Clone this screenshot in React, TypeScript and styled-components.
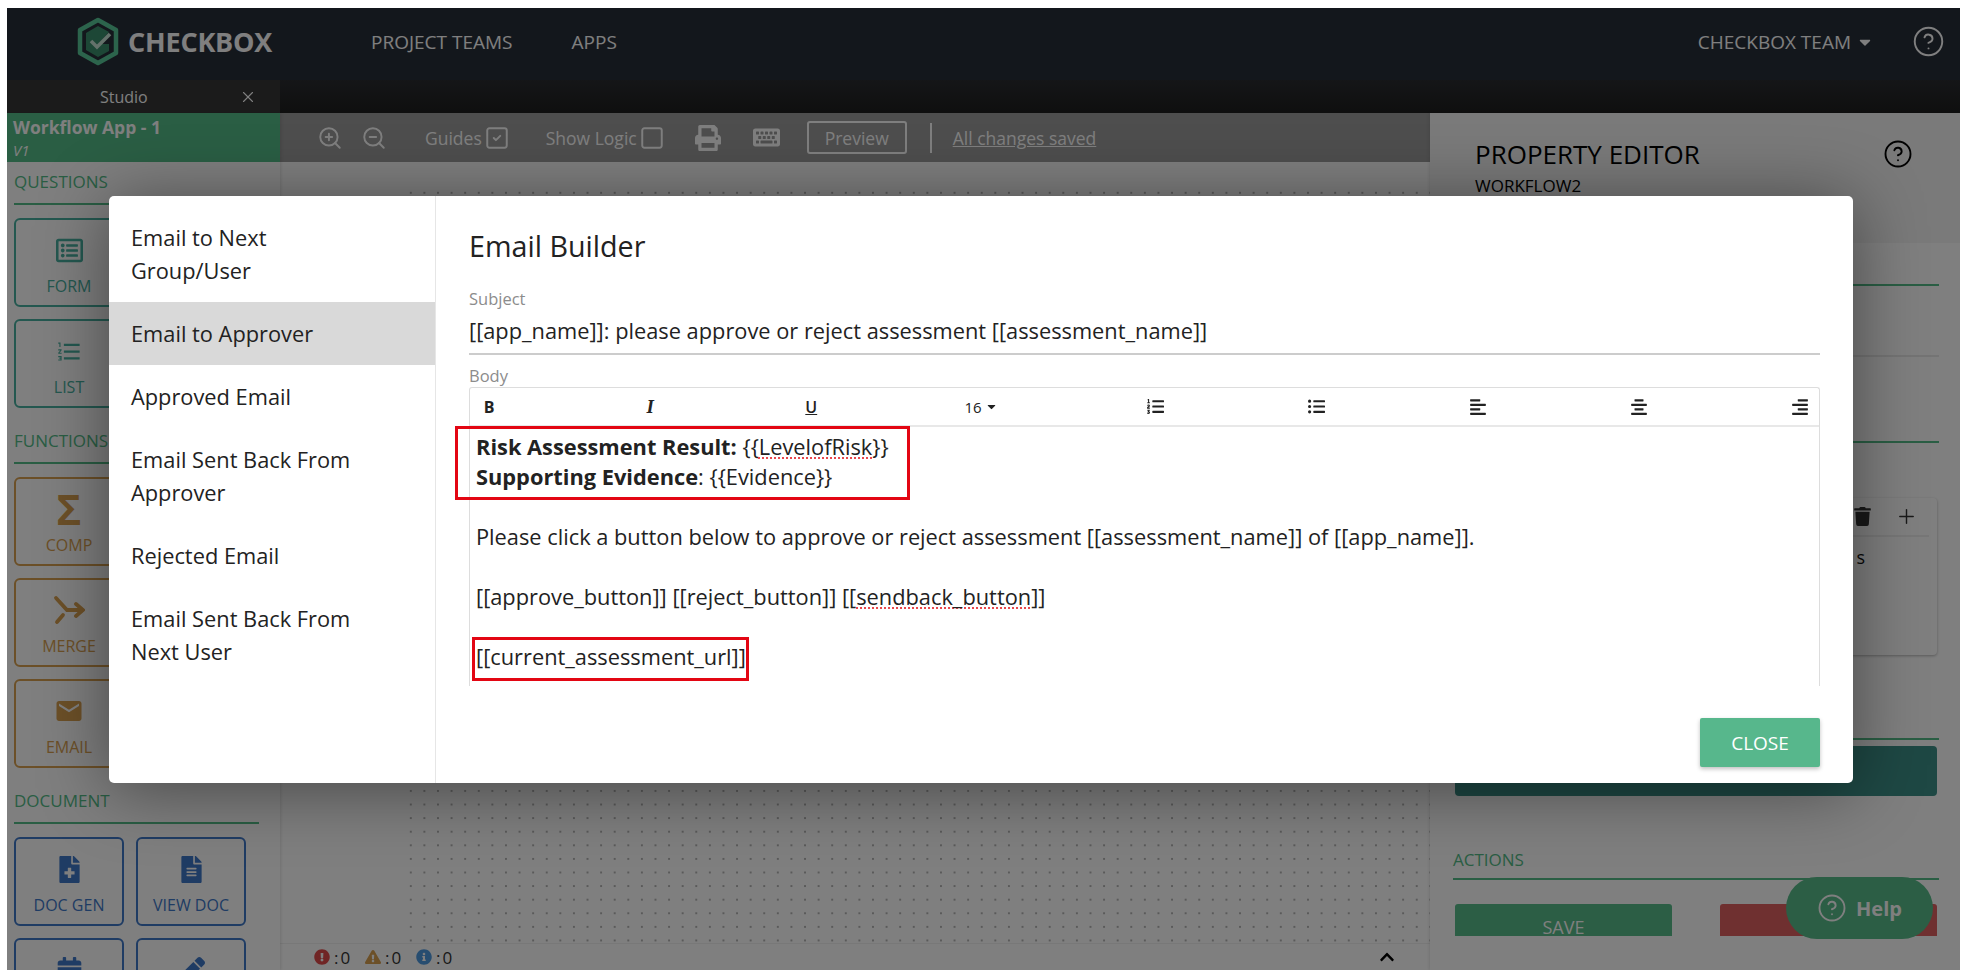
import React from "react";
import styled, { createGlobalStyle } from "styled-components";
import { CircleHelp, SquareCheck, Square, X, ZoomIn, ZoomOut, Plus } from "lucide-react";
import {
  FaRegListAlt,
  FaPrint,
  FaKeyboard,
  FaTrash,
  FaFileMedical,
  FaFileAlt,
  FaPen,
  FaCalendarAlt,
  FaCaretDown,
  FaListOl,
  FaListUl,
  FaAlignLeft,
  FaAlignCenter,
  FaAlignRight,
  FaExclamationCircle,
  FaExclamationTriangle,
  FaInfoCircle,
  FaChevronUp,
} from "react-icons/fa";
import { MdEmail, MdFormatListNumbered } from "react-icons/md";

const green = "#54bc88";
const teal = "#48b0a0";
const orange = "#d8a050";
const blue = "#3f78c8";

const GlobalStyle = createGlobalStyle`
  html, body {
    margin: 0;
    padding: 0;
    background: #fff;
  }
  body {
    font-family: "Open Sans", "Noto Sans", sans-serif;
    overflow: hidden;
  }
`;

const Page = styled.div`
  width: 1966px;
  height: 976px;
  padding: 8px 6px 6px 7px;
  box-sizing: border-box;
`;

const Frame = styled.div`
  position: relative;
  width: 1953px;
  height: 962px;
  display: flex;
  flex-direction: column;
  overflow: hidden;
  background: #fff;
`;

const Header = styled.header`
  height: 72px;
  flex: none;
  box-sizing: border-box;
  display: flex;
  align-items: center;
  background: #272e38;
  color: #fff;
  padding: 0 15px 5px 69px;
`;

const Brand = styled.div`
  display: flex;
  align-items: center;
  gap: 8px;
  width: 295px;
  font-size: 27px;
  font-weight: 700;
  letter-spacing: -0.2px;
`;

const NavLink = styled.span`
  font-size: 19px;
  margin-right: 59px;
`;

const HeaderRight = styled.div`
  margin-left: auto;
  display: flex;
  align-items: center;
  font-size: 19px;
`;

const Caret = styled(FaCaretDown)`
  margin: 0 38px 0 5px;
  font-size: 18px;
`;

const TabBar = styled.div`
  height: 33px;
  flex: none;
  background: linear-gradient(#2a2c30, #1e1e1e);
  display: flex;
`;

const Tab = styled.div`
  width: 273px;
  background: #363636;
  color: #fff;
  display: flex;
  align-items: center;
  font-size: 16px;
  padding: 0 23px 0 93px;
  box-sizing: border-box;
  justify-content: space-between;
`;

const Workspace = styled.div`
  flex: 1;
  min-height: 0;
  display: flex;
`;

const Sidebar = styled.aside`
  width: 273px;
  flex: none;
  display: flex;
  flex-direction: column;
  overflow: hidden;
  background: #fff;
  box-shadow: 1px 0 3px rgba(0, 0, 0, 0.12);
  z-index: 1;
`;

const AppTitle = styled.div`
  height: 49px;
  flex: none;
  background: ${green};
  color: #fff;
  padding: 3px 6px;
  box-sizing: border-box;
  font-size: 17.5px;
  line-height: 23px;
  font-weight: 700;
`;

const AppVersion = styled.div`
  font-weight: 400;
  font-style: italic;
  font-size: 15px;
`;

const SideBody = styled.div`
  padding: 8px 21px 0 7px;
`;

const SectionTitle = styled.div<{ $color: string }>`
  color: ${(p) => p.$color};
  font-size: 17px;
  line-height: 24px;
  padding-bottom: 9px;
  border-bottom: 2px solid ${(p) => p.$color};
  margin-bottom: 13px;
`;

const TileGrid = styled.div`
  display: grid;
  grid-template-columns: 110px 110px;
  column-gap: 12px;
  row-gap: 12px;
  margin-bottom: 21px;
`;

const Tile = styled.div<{ $color: string }>`
  height: 89px;
  box-sizing: border-box;
  border: 2px solid ${(p) => p.$color};
  border-radius: 6px;
  color: ${(p) => p.$color};
  display: flex;
  flex-direction: column;
  align-items: center;
  font-size: 16px;
  padding-top: 15px;
  gap: 10px;
`;

const TileIcon = styled.div`
  height: 30px;
  display: flex;
  align-items: center;
  justify-content: center;
  font-size: 27px;
`;

const Sigma = styled.span`
  font-size: 42px;
  font-weight: 700;
  line-height: 30px;
`;

const Main = styled.main`
  flex: 1;
  min-width: 0;
  display: flex;
  flex-direction: column;
`;

const Toolbar = styled.div`
  height: 49px;
  flex: none;
  background: #9c9c9c;
  color: #fff;
  display: flex;
  align-items: center;
  font-size: 17.5px;
  padding-left: 37px;
`;

const ToolItem = styled.span<{ $ml?: number }>`
  display: inline-flex;
  align-items: center;
  gap: 2px;
  margin-left: ${(p) => p.$ml ?? 0}px;
`;

const PreviewButton = styled.span`
  margin-left: 27px;
  width: 100px;
  height: 33px;
  box-sizing: border-box;
  border: 2px solid #fff;
  border-radius: 3px;
  display: flex;
  align-items: center;
  justify-content: center;
`;

const ToolDivider = styled.span`
  width: 2px;
  height: 30px;
  background: #fff;
  margin: 0 21px 0 23px;
`;

const SavedLink = styled.span`
  text-decoration: underline;
`;

const Canvas = styled.div`
  flex: 1;
  min-height: 0;
  padding: 24px 0 0 124px;
  display: flex;
`;

const DotGrid = styled.div`
  flex: 1;
  background-image: radial-gradient(circle, #b4b4b4 0.8px, transparent 1px);
  background-size: 13.6px 13.6px;
`;

const StatusBar = styled.div`
  height: 27px;
  flex: none;
  display: flex;
  align-items: center;
  padding: 0 0 0 34px;
  font-size: 17px;
  letter-spacing: 2px;
  color: #333;
  border-top: 1px solid #f0f0f0;
  box-sizing: border-box;
`;

const StatusItem = styled.span<{ $color: string }>`
  display: inline-flex;
  align-items: center;
  gap: 4px;
  width: 51px;
  svg {
    color: ${(p) => p.$color};
    font-size: 16px;
  }
`;

const CollapseIcon = styled(FaChevronUp)`
  margin-left: auto;
  margin-right: 35px;
  font-size: 16px;
  color: #000;
`;

const Panel = styled.aside`
  width: 530px;
  flex: none;
  display: flex;
  flex-direction: column;
  box-shadow: -1px 0 3px rgba(0, 0, 0, 0.1);
`;

const PanelHead = styled.div`
  height: 130px;
  flex: none;
  background: #f4f4f4;
  padding: 24px 47px 0 45px;
  box-sizing: border-box;
  color: #000;
`;

const PanelTitleRow = styled.div`
  display: flex;
  align-items: center;
  justify-content: space-between;
  font-size: 26px;
  line-height: 34px;
`;

const PanelSubTitle = styled.div`
  font-size: 17px;
  line-height: 24px;
  margin-top: 3px;
`;

const PanelBody = styled.div`
  height: 693px;
  flex: none;
  overflow: hidden;
  padding: 0 21px 0 23px;
`;

const Rule = styled.div<{ $top: number; $color: string }>`
  margin-top: ${(p) => p.$top}px;
  height: 2px;
  background: ${(p) => p.$color};
`;

const Card = styled.div`
  margin: 55px 2px 0;
  height: 157px;
  border-radius: 4px;
  background: #fff;
  box-shadow: 0 1px 3px rgba(0, 0, 0, 0.3);
  box-sizing: border-box;
`;

const CardActions = styled.div`
  height: 37px;
  border-bottom: 2px solid #eee;
  margin: 0 8px;
  padding-right: 11px;
  display: flex;
  justify-content: flex-end;
  align-items: center;
  gap: 23px;
  color: #333;
`;

const CardText = styled.div`
  font-size: 18px;
  text-align: right;
  padding: 8px 72px 0 0;
  color: #111;
`;

const WideButton = styled.div`
  margin: 6px 2px 0;
  height: 50px;
  border-radius: 4px;
  background: #3c9088;
`;

const ActionsTitle = styled.div`
  margin-top: 51px;
  font-size: 17px;
  line-height: 26px;
  color: ${green};
`;

const ActionRow = styled.div`
  margin: 24px 2px 0;
  display: flex;
  justify-content: space-between;
`;

const ActionButton = styled.div<{ $bg: string }>`
  width: 217px;
  height: 44px;
  background: ${(p) => p.$bg};
  color: #fff;
  border-radius: 3px;
  font-size: 18px;
  line-height: 44px;
  padding-top: 1px;
  text-align: center;
`;

const HelpPill = styled.div`
  position: absolute;
  right: 27px;
  bottom: 31px;
  width: 147px;
  height: 62px;
  border-radius: 31px;
  background: #58bc8a;
  color: #fff;
  font-size: 20px;
  font-weight: 700;
  display: flex;
  align-items: center;
  justify-content: center;
  gap: 9px;
`;

const Overlay = styled.div`
  position: absolute;
  inset: 0;
  background: rgba(0, 0, 0, 0.5);
  z-index: 2;
`;

const Modal = styled.section`
  position: absolute;
  left: 102px;
  top: 188px;
  width: 1744px;
  height: 587px;
  background: #fff;
  border-radius: 5px;
  display: flex;
  box-shadow: 0 6px 70px rgba(0, 0, 0, 0.45);
  z-index: 3;
  color: #222;
`;

const Menu = styled.nav`
  width: 327px;
  flex: none;
  box-sizing: border-box;
  border-right: 1px solid #e6e6e6;
  padding-top: 10px;
`;

const MenuItem = styled.div<{ $active?: boolean }>`
  padding: 15px 70px 15px 22px;
  font-size: 21.8px;
  line-height: 33px;
  background: ${(p) => (p.$active ? "#d9d9d9" : "transparent")};
`;

const Builder = styled.div`
  flex: 1;
  min-width: 0;
  padding: 30px 33px 0 33px;
  display: flex;
  flex-direction: column;
`;

const BuilderTitle = styled.h2`
  margin: 0;
  font-size: 28.7px;
  line-height: 40px;
  font-weight: 400;
`;

const FieldLabel = styled.div`
  color: #8c8c8c;
  font-size: 16.5px;
  line-height: 20px;
`;

const SubjectField = styled.div`
  margin-top: 21px;
  padding-top: 2px;
`;

const SubjectValue = styled.div`
  font-size: 21.8px;
  line-height: 30px;
  margin-top: 7px;
  padding-bottom: 7px;
  border-bottom: 2px solid #ccc;
  margin-bottom: 11px;
`;

const Editor = styled.div`
  margin-top: 1px;
  height: 299px;
  box-sizing: border-box;
  border: 1px solid #ddd;
  border-bottom: none;
  border-radius: 3px 3px 0 0;
  display: flex;
  flex-direction: column;
`;

const EditorTools = styled.div`
  height: 37px;
  flex: none;
  display: flex;
  align-items: center;
  justify-content: space-between;
  border-bottom: 2px solid #e8e8e8;
  padding: 0 7px;
  font-size: 15px;
  color: #222;
`;

const EditorTool = styled.span`
  width: 24px;
  display: flex;
  align-items: center;
  justify-content: center;
  gap: 3px;
  white-space: nowrap;
  svg {
    flex: none;
  }
`;

const SizeTool = styled(EditorTool)`
  width: 46px;
  justify-content: flex-start;
  padding-left: 4px;
  box-sizing: border-box;
`;

const BoldTool = styled(EditorTool)`
  font-weight: 700;
  font-size: 16px;
`;

const ItalicTool = styled(EditorTool)`
  font-weight: 700;
  font-style: italic;
  font-family: "Liberation Serif", serif;
  font-size: 19px;
`;

const UnderlineTool = styled(EditorTool)`
  text-decoration: underline;
  font-weight: 600;
  font-size: 16px;
`;

const EditorBody = styled.div`
  position: relative;
  padding: 4.5px 6px 0 6px;
  font-size: 21.8px;
  line-height: 30px;
  color: #222;
`;

const EditorLine = styled.div<{ $gap?: boolean }>`
  margin-top: ${(p) => (p.$gap ? 30 : 0)}px;
  white-space: nowrap;
`;

const Spelling = styled.span`
  text-decoration: underline dotted #e8484d 2px;
  text-underline-offset: 3px;
`;

const Highlight = styled.div<{ $left: number; $top: number; $w: number; $h: number }>`
  position: absolute;
  left: ${(p) => p.$left}px;
  top: ${(p) => p.$top}px;
  width: ${(p) => p.$w}px;
  height: ${(p) => p.$h}px;
  box-sizing: border-box;
  border: 3px solid #e30613;
`;

const BuilderFooter = styled.div`
  display: flex;
  justify-content: flex-end;
  margin-top: 32px;
`;

const CloseButton = styled.button`
  width: 120px;
  height: 49px;
  border: none;
  border-radius: 2px;
  background: #57b78c;
  color: #fff;
  font-family: inherit;
  font-size: 19px;
  box-shadow: 0 2px 4px rgba(0, 0, 0, 0.25);
`;

const Logo = () => (
  <svg width="44" height="49" viewBox="0 0 44 49" fill="none">
    <path d="M22 3 L40 13 V36 L22 46 L4 36 V13 Z" stroke="#58c898" strokeWidth="4.5" strokeLinejoin="round" />
    <path d="M33 15 L22 9 L10 16 V33 L22 40 L33 34 V27 H22" fill="#3a8f6c" />
    <path d="M15 24 L21 30 L34 17" stroke="#c8e4d6" strokeWidth="3.6" />
  </svg>
);

const MergeIcon = () => (
  <svg width="32" height="30" viewBox="0 0 32 30" fill="none" stroke="currentColor" strokeWidth="3.8" strokeLinecap="round">
    <path d="M3 3 L14 15 H29" />
    <path d="M23 9 L30 15 L23 21" />
    <path d="M10 20 L4 27" />
  </svg>
);

export default function App() {
  return (
    <Page>
      <GlobalStyle />
      <Frame>
        <Header>
          <Brand>
            <Logo />
            CHECKBOX
          </Brand>
          <NavLink>PROJECT TEAMS</NavLink>
          <NavLink>APPS</NavLink>
          <HeaderRight>
            CHECKBOX TEAM
            <Caret />
            <CircleHelp size={33} strokeWidth={1.4} />
          </HeaderRight>
        </Header>
        <TabBar>
          <Tab>
            Studio
            <X size={18} strokeWidth={1.5} />
          </Tab>
        </TabBar>
        <Workspace>
          <Sidebar>
            <AppTitle>
              Workflow App - 1
              <AppVersion>V1</AppVersion>
            </AppTitle>
            <SideBody>
              <SectionTitle $color={green}>QUESTIONS</SectionTitle>
              <TileGrid>
                <Tile $color={teal}>
                  <TileIcon><FaRegListAlt /></TileIcon>
                  FORM
                </Tile>
                <span />
                <Tile $color={teal}>
                  <TileIcon><MdFormatListNumbered /></TileIcon>
                  LIST
                </Tile>
              </TileGrid>
              <SectionTitle $color={green}>FUNCTIONS</SectionTitle>
              <TileGrid>
                <Tile $color={orange}>
                  <TileIcon><Sigma>Σ</Sigma></TileIcon>
                  COMP
                </Tile>
                <span />
                <Tile $color={orange}>
                  <TileIcon><MergeIcon /></TileIcon>
                  MERGE
                </Tile>
                <span />
                <Tile $color={orange}>
                  <TileIcon><MdEmail size={30} /></TileIcon>
                  EMAIL
                </Tile>
              </TileGrid>
              <SectionTitle $color={green}>DOCUMENT</SectionTitle>
              <TileGrid>
                <Tile $color={blue}>
                  <TileIcon><FaFileMedical /></TileIcon>
                  DOC GEN
                </Tile>
                <Tile $color={blue}>
                  <TileIcon><FaFileAlt /></TileIcon>
                  VIEW DOC
                </Tile>
                <Tile $color={blue}>
                  <TileIcon><FaCalendarAlt /></TileIcon>
                </Tile>
                <Tile $color={blue}>
                  <TileIcon><FaPen /></TileIcon>
                </Tile>
              </TileGrid>
            </SideBody>
          </Sidebar>
          <Main>
            <Toolbar>
              <ToolItem><ZoomIn size={26} strokeWidth={1.8} /></ToolItem>
              <ToolItem $ml={18}><ZoomOut size={26} strokeWidth={1.8} /></ToolItem>
              <ToolItem $ml={38}>Guides <SquareCheck size={26} strokeWidth={1.8} /></ToolItem>
              <ToolItem $ml={36}>Show Logic <Square size={26} strokeWidth={1.8} /></ToolItem>
              <ToolItem $ml={30}><FaPrint size={26} /></ToolItem>
              <ToolItem $ml={32}><FaKeyboard size={27} /></ToolItem>
              <PreviewButton>Preview</PreviewButton>
              <ToolDivider />
              <SavedLink>All changes saved</SavedLink>
            </Toolbar>
            <Canvas>
              <DotGrid />
            </Canvas>
            <StatusBar>
              <StatusItem $color="#e04b4b"><FaExclamationCircle />:0</StatusItem>
              <StatusItem $color={orange}><FaExclamationTriangle />:0</StatusItem>
              <StatusItem $color="#4f9ae0"><FaInfoCircle />:0</StatusItem>
              <CollapseIcon />
            </StatusBar>
          </Main>
          <Panel>
            <PanelHead>
              <PanelTitleRow>
                PROPERTY EDITOR
                <CircleHelp size={30} strokeWidth={1.5} />
              </PanelTitleRow>
              <PanelSubTitle>WORKFLOW2</PanelSubTitle>
            </PanelHead>
            <PanelBody>
              <Rule $top={41} $color={green} />
              <Rule $top={69} $color="#e8e8e8" />
              <Rule $top={84} $color={green} />
              <Card>
                <CardActions>
                  <FaTrash size={19} />
                  <Plus size={23} strokeWidth={1.5} />
                </CardActions>
                <CardText>s</CardText>
              </Card>
              <Rule $top={83} $color={green} />
              <WideButton />
              <ActionsTitle>ACTIONS</ActionsTitle>
              <Rule $top={5} $color={green} />
              <ActionRow>
                <ActionButton $bg="#58bc8a">SAVE</ActionButton>
                <ActionButton $bg="#de6060" />
              </ActionRow>
            </PanelBody>
          </Panel>
        </Workspace>
        <HelpPill>
          <CircleHelp size={30} strokeWidth={1.5} />
          Help
        </HelpPill>
        <Overlay />
        <Modal>
          <Menu>
            <MenuItem>Email to Next Group/User</MenuItem>
            <MenuItem $active>Email to Approver</MenuItem>
            <MenuItem>Approved Email</MenuItem>
            <MenuItem>Email Sent Back From Approver</MenuItem>
            <MenuItem>Rejected Email</MenuItem>
            <MenuItem>Email Sent Back From Next User</MenuItem>
          </Menu>
          <Builder>
            <BuilderTitle>Email Builder</BuilderTitle>
            <SubjectField>
              <FieldLabel>Subject</FieldLabel>
              <SubjectValue>[[app_name]]: please approve or reject assessment [[assessment_name]]</SubjectValue>
            </SubjectField>
            <FieldLabel>Body</FieldLabel>
            <Editor>
              <EditorTools>
                <BoldTool>B</BoldTool>
                <ItalicTool>I</ItalicTool>
                <UnderlineTool>U</UnderlineTool>
                <SizeTool>16 <FaCaretDown size={13} /></SizeTool>
                <EditorTool><FaListOl size={17} /></EditorTool>
                <EditorTool><FaListUl size={17} /></EditorTool>
                <EditorTool><FaAlignLeft size={18} /></EditorTool>
                <EditorTool><FaAlignCenter size={18} /></EditorTool>
                <EditorTool><FaAlignRight size={18} /></EditorTool>
              </EditorTools>
              <EditorBody>
                <EditorLine>
                  <strong>Risk Assessment Result:</strong> {"{{"}<Spelling>LevelofRisk</Spelling>{"}}"}
                </EditorLine>
                <EditorLine>
                  <strong>Supporting Evidence</strong>: {"{{Evidence}}"}
                </EditorLine>
                <EditorLine $gap>
                  Please click a button below to approve or reject assessment [[assessment_name]] of [[app_name]].
                </EditorLine>
                <EditorLine $gap>
                  [[approve_button]] [[reject_button]] [[<Spelling>sendback_button</Spelling>]]
                </EditorLine>
                <EditorLine $gap>[[current_assessment_url]]</EditorLine>
                <Highlight $left={-15} $top={-1} $w={455} $h={74} />
                <Highlight $left={2} $top={210} $w={277} $h={44} />
              </EditorBody>
            </Editor>
            <BuilderFooter>
              <CloseButton>CLOSE</CloseButton>
            </BuilderFooter>
          </Builder>
        </Modal>
      </Frame>
    </Page>
  );
}
